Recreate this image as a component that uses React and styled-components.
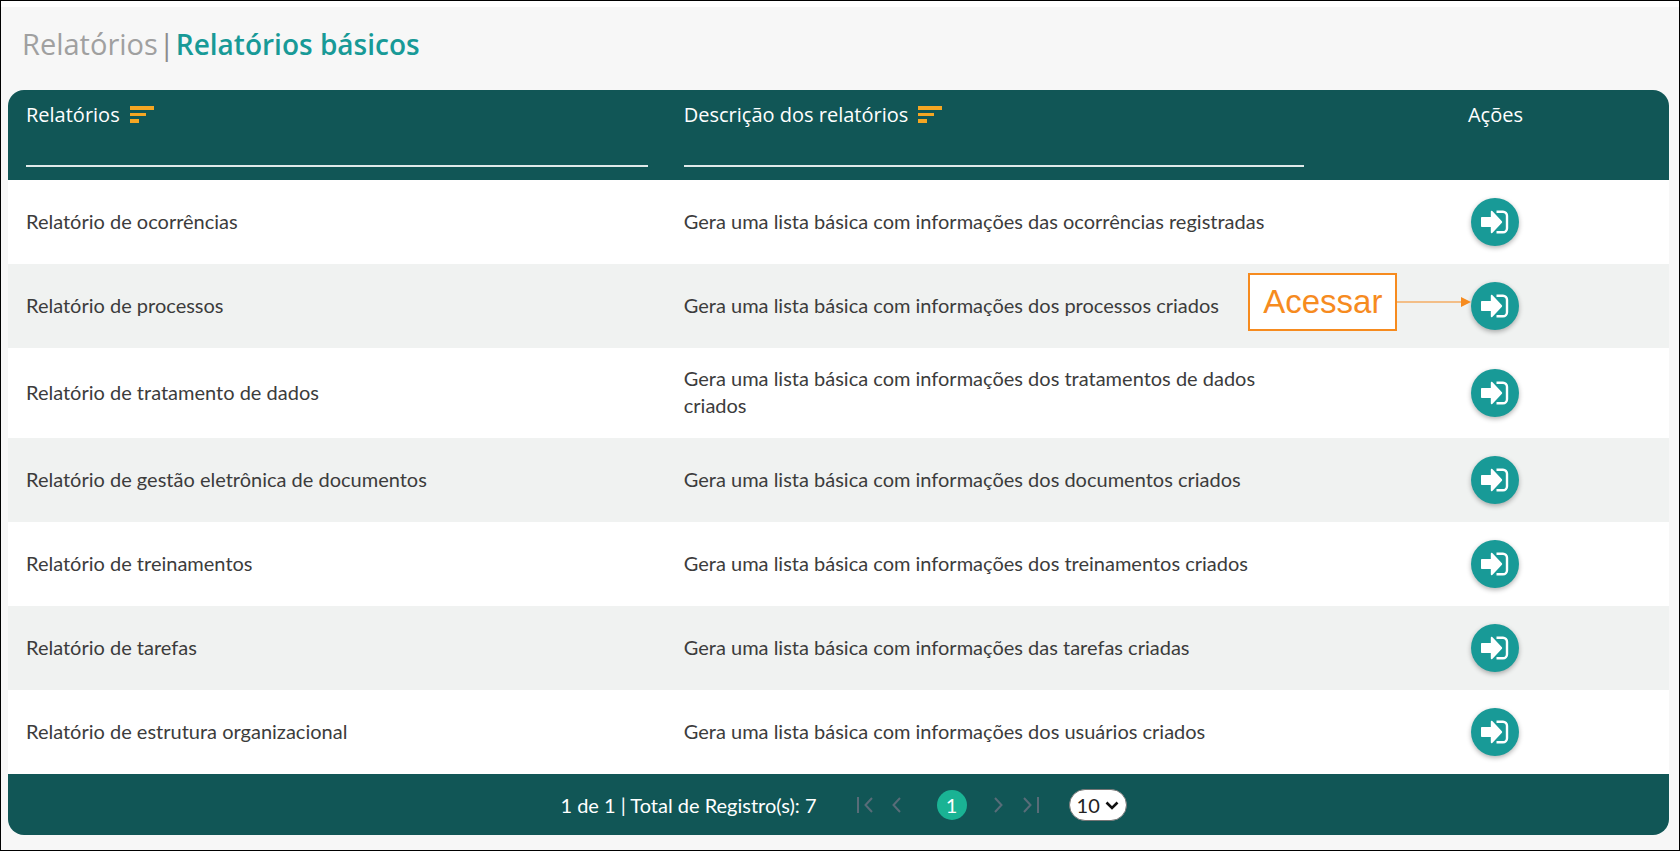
import React, { useState } from 'react'
import styled, { createGlobalStyle } from 'styled-components'

const reports = [
	{ name: 'Relatório de ocorrências', description: 'Gera uma lista básica com informações das ocorrências registradas' },
	{ name: 'Relatório de processos', description: 'Gera uma lista básica com informações dos processos criados', hint: 'Acessar' },
	{ name: 'Relatório de tratamento de dados', description: 'Gera uma lista básica com informações dos tratamentos de dados criados' },
	{ name: 'Relatório de gestão eletrônica de documentos', description: 'Gera uma lista básica com informações dos documentos criados' },
	{ name: 'Relatório de treinamentos', description: 'Gera uma lista básica com informações dos treinamentos criados' },
	{ name: 'Relatório de tarefas', description: 'Gera uma lista básica com informações das tarefas criadas' },
	{ name: 'Relatório de estrutura organizacional', description: 'Gera uma lista básica com informações dos usuários criados' },
]

const SortIcon = () => (
	<svg width="24" height="17" viewBox="0 0 24 17" fill="#f5a623" aria-hidden="true">
		<rect width="24" height="4" />
		<rect y="7" width="16" height="3" />
		<rect y="13" width="9" height="4" />
	</svg>
)

const EnterIcon = () => (
	<svg width="28" height="24" viewBox="0 0 28 24" aria-hidden="true">
		<path
			d="M.8 7h9V1.800c0-1 .8-1.400 1.500-.7l9.600 10.200c.4.400.4 1 0 1.400l-9.600 10.200c-.7.700-1.500.3-1.500-.7V17h-9C.3 17 0 16.700 0 16.200V7.800C0 7.300.3 7 .8 7z"
			fill="#fff"
		/>
		<path d="M15.500 1.700H22a4 4 0 0 1 4 4v12.600a4 4 0 0 1-4 4h-6.500" fill="none" stroke="#fff" strokeWidth="2.400" />
	</svg>
)

const PagerIcon = ({ back, edge }) => (
	<svg width={edge ? 16 : 9} height="16" viewBox={edge ? '0 0 16 16' : '0 0 9 16'} fill="none" stroke="currentColor" strokeWidth="2" aria-hidden="true">
		{back && !edge && <path d="M8 1 1.500 8 8 15" />}
		{!back && !edge && <path d="m1 1 6.500 7L1 15" />}
		{back && edge && <path d="M1 0v16M15 1 8.500 8l6.500 7" />}
		{!back && edge && <path d="M15 0v16M1 1l6.500 7L1 15" />}
	</svg>
)

const App = () => {
	const [nameFilter, setNameFilter] = useState('')
	const [descriptionFilter, setDescriptionFilter] = useState('')
	const [pageSize, setPageSize] = useState('10')

	const matches = (text, filter) => text.toLowerCase().includes(filter.toLowerCase())
	const rows = reports.filter(r => matches(r.name, nameFilter) && matches(r.description, descriptionFilter))

	return (
		<Page>
			<GlobalStyle />
			<Breadcrumb>
				<a href="#relatorios">Relatórios</a>
				<span>|</span>
				<h1>Relatórios básicos</h1>
			</Breadcrumb>
			<Card>
				<Table>
					<colgroup>
						<Col $width="39.6%" />
						<Col $width="39.5%" />
						<Col $width="20.9%" />
					</colgroup>
					<thead>
						<tr>
							<HeadCell>
								<SortButton type="button">
									Relatórios <SortIcon />
								</SortButton>
								<Filter aria-label="Filtrar relatórios" value={nameFilter} onChange={e => setNameFilter(e.target.value)} />
							</HeadCell>
							<HeadCell>
								<SortButton type="button">
									Descrição dos relatórios <SortIcon />
								</SortButton>
								<Filter
									aria-label="Filtrar descrição"
									value={descriptionFilter}
									onChange={e => setDescriptionFilter(e.target.value)}
								/>
							</HeadCell>
							<HeadCell $center>Ações</HeadCell>
						</tr>
					</thead>
					<tbody>
						{rows.map(report => (
							<Row key={report.name}>
								<Cell>{report.name}</Cell>
								<Cell>{report.description}</Cell>
								<ActionCell>
									<Action>
										{report.hint && (
											<Hint>
												<HintLabel>{report.hint}</HintLabel>
												<svg width="74" height="12" viewBox="0 0 74 12" aria-hidden="true">
													<path d="M0 6h66" stroke="#f68b1f" />
													<path d="M64 1l10 5-10 5z" fill="#f68b1f" />
												</svg>
											</Hint>
										)}
										<AccessButton type="button" aria-label={`Acessar ${report.name}`}>
											<EnterIcon />
										</AccessButton>
									</Action>
								</ActionCell>
							</Row>
						))}
					</tbody>
				</Table>
				<Footer>
					<span>1 de 1 | Total de Registro(s): 7</span>
					<Pager aria-label="Paginação">
						<PagerButton type="button" disabled aria-label="Primeira página">
							<PagerIcon back edge />
						</PagerButton>
						<PagerButton type="button" disabled aria-label="Página anterior">
							<PagerIcon back />
						</PagerButton>
						<CurrentPage type="button">1</CurrentPage>
						<PagerButton type="button" disabled aria-label="Próxima página">
							<PagerIcon />
						</PagerButton>
						<PagerButton type="button" disabled aria-label="Última página">
							<PagerIcon edge />
						</PagerButton>
					</Pager>
					<PageSize>
						<select aria-label="Registros por página" value={pageSize} onChange={e => setPageSize(e.target.value)}>
							<option>10</option>
							<option>20</option>
							<option>50</option>
						</select>
						<svg width="14" height="9" viewBox="0 0 14 9" aria-hidden="true">
							<path d="m1.500 1.500 5.500 5.500 5.500-5.500" fill="none" stroke="#111" strokeWidth="2.600" />
						</svg>
					</PageSize>
				</Footer>
			</Card>
		</Page>
	)
}

const GlobalStyle = createGlobalStyle`
	* {
		box-sizing: border-box;
	}
	body {
		margin: 0;
		font-family: 'Open Sans', 'Noto Sans', sans-serif;
	}
	button,
	input,
	select {
		font: inherit;
		color: inherit;
	}
`

const Page = styled.main`
	min-height: 100vh;
	padding: 0 10px 14px 7px;
	background-color: #f7f7f7;
	border: 1px solid #000;
	box-shadow: inset 0 6px #fff;
`

const Breadcrumb = styled.nav`
	display: flex;
	align-items: center;
	gap: 1px;
	height: 89px;
	padding: 0 14px 4px;
	font-size: 29px;
	color: #8c8c8c;
	a {
		color: #a0a0a0;
		text-decoration: none;
	}
	h1 {
		margin: 0;
		font-size: 28px;
		font-weight: 600;
		color: #189a97;
	}
`

const Card = styled.section`
	overflow: hidden;
	border-radius: 16px;
	background-color: #fff;
`

const Table = styled.table`
	width: 100%;
	table-layout: fixed;
	border-collapse: collapse;
`

const Col = styled.col`
	width: ${({ $width }) => $width};
`

const HeadCell = styled.th`
	height: 90px;
	padding: 12px 18px;
	vertical-align: top;
	text-align: ${({ $center }) => ($center ? 'center' : 'left')};
	font-size: 20px;
	font-weight: 500;
	line-height: 26px;
	color: #fff;
	background-color: #115656;
`

const SortButton = styled.button`
	display: flex;
	align-items: center;
	gap: 10px;
	padding: 0;
	background: none;
	border: none;
	cursor: pointer;
	svg {
		margin-bottom: 2px;
	}
`

const Filter = styled.input`
	display: block;
	width: 100%;
	height: 39px;
	padding: 12px 0 0;
	background: none;
	border: none;
	border-bottom: 2px solid #dfe9e9;
	outline: none;
`

const Row = styled.tr`
	background-color: #fff;
	&:nth-child(even) {
		background-color: #f0f2f1;
	}
`

const Cell = styled.td`
	padding: 17px 18px 19px;
	font-family: Lato, sans-serif;
	font-size: 20px;
	line-height: 27px;
	color: #3c3c3c;
`

const ActionCell = styled.td`
	padding: 18px;
`

const Action = styled.div`
	position: relative;
	width: 48px;
	margin: 0 auto;
`

const AccessButton = styled.button`
	display: flex;
	align-items: center;
	justify-content: center;
	width: 48px;
	height: 48px;
	padding: 0;
	background-color: #189a97;
	border: none;
	border-radius: 50%;
	box-shadow: 0 2px 5px rgba(0, 0, 0, 0.3);
	cursor: pointer;
`

const Hint = styled.div`
	position: absolute;
	top: -9px;
	right: 100%;
	display: flex;
	align-items: center;
`

const HintLabel = styled.span`
	padding: 8px 13px;
	font-family: 'Liberation Sans', Arial, sans-serif;
	font-size: 33px;
	line-height: 38px;
	color: #f68b1f;
	background-color: #fff;
	border: 2px solid #f68b1f;
`

const Footer = styled.footer`
	display: flex;
	align-items: center;
	justify-content: center;
	gap: 26px;
	height: 61px;
	padding-left: 10px;
	font-family: Lato, sans-serif;
	font-size: 20px;
	color: #fff;
	background-color: #115656;
`

const Pager = styled.nav`
	display: flex;
	align-items: center;
	gap: 8px;
	margin-left: 10px;
`

const PagerButton = styled.button`
	display: flex;
	justify-content: center;
	min-width: 24px;
	padding: 0;
	color: #586c78;
	background: none;
	border: none;
`

const CurrentPage = styled.button`
	width: 30px;
	height: 30px;
	margin: 0 12px 0 20px;
	padding: 0;
	line-height: 30px;
	background-color: #1ab394;
	border: none;
	border-radius: 50%;
`

const PageSize = styled.div`
	position: relative;
	select {
		display: block;
		width: 58px;
		height: 32px;
		padding: 0 7px;
		appearance: none;
		color: #222;
		background-color: #fff;
		border: 1px solid #767676;
		border-radius: 16px;
	}
	svg {
		position: absolute;
		top: 12px;
		right: 8px;
		pointer-events: none;
	}
`

export default App
